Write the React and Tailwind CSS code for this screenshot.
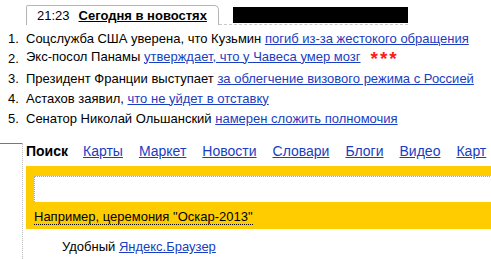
export default function App() {
  const items = [
    { n: "1.", t: "Соцслужба США уверена, что Кузьмин ", l: "погиб из-за жестокого обращения" },
    { n: "2.", t: "Экс-посол Панамы ", l: "утверждает, что у Чавеса умер мозг", star: true },
    { n: "3.", t: "Президент Франции выступает ", l: "за облегчение визового режима с Россией" },
    { n: "4.", t: "Астахов заявил, ", l: "что не уйдет в отставку" },
    { n: "5.", t: "Сенатор Николай Ольшанский ", l: "намерен сложить полномочия" },
  ];
  const tabs = ["Карты", "Маркет", "Новости", "Словари", "Блоги", "Видео", "Карт"];
  return (
    <div className="w-[491px] h-[259px] overflow-hidden bg-white text-black" style={{ fontFamily: '"Liberation Sans", Arial, sans-serif' }}>
      <div className="flex items-end pt-[5px] pl-[26px]">
        <div className="h-[20px] border border-b-0 border-[#b5b5b5] rounded-tr-[5px] rounded-tl-[2px] pl-[10px] pr-[11px] flex items-center text-[13px] leading-none bg-white">
          <span>21:23</span>
          <span className="ml-[9px] font-bold underline">Сегодня в новостях</span>
        </div>
        <div className="border-b border-dashed border-[#c8c8c8] pl-[14px] pb-[1px]">
          <div className="w-[175px] h-[16px] bg-black"></div>
        </div>
      </div>
      <div className="pt-[3px]">
        {items.map((it) => (
          <div key={it.n} className="flex h-[20px] items-center text-[13px] leading-none whitespace-nowrap">
            <span className="w-[26px] shrink-0 pl-[8px]">{it.n}</span>
            <span className="block">
              {it.t}
              <a className="text-[#1a3dc1] underline">{it.l}</a>
              {it.star && <span className="ml-[10px] text-[#ff1a1a] text-[19px] font-bold leading-none tracking-[2px] align-[-4px]">***</span>}
            </span>
          </div>
        ))}
      </div>
      <div className="mt-[15px] flex">
        <div className="w-[23px] shrink-0 flex">
          <div className="w-[22px] border-t border-[#777]"></div>
          <div className="w-0 h-[120px] border-l border-dotted border-[#bbb]"></div>
        </div>
        <div className="pl-[3px] flex-1 min-w-0">
          <div className="flex items-center h-[16px] text-[14px] leading-none whitespace-nowrap">
            <span className="font-bold mr-[15px]">Поиск</span>
            {tabs.map((t) => (
              <a key={t} className="text-[#1a3dc1] underline mr-[16px]">{t}</a>
            ))}
          </div>
          <div className="mt-[7px] bg-[#ffcc00] h-[63px] pl-[8px] pt-[10px] w-[500px]">
            <div className="h-[26px] bg-white border-t border-l border-dotted border-[#aaa]"></div>
            <div className="mt-[8px] text-[13px] leading-none whitespace-nowrap">
              <span className="border-b border-dotted border-black">Например, церемония "Оскар-2013"</span>
            </div>
          </div>
          <div className="mt-[11px] pl-[36px] text-[13px] leading-none whitespace-nowrap">
            Удобный <a className="text-[#1a3dc1] underline">Яндекс.Браузер</a>
          </div>
        </div>
      </div>
    </div>
  );
}
